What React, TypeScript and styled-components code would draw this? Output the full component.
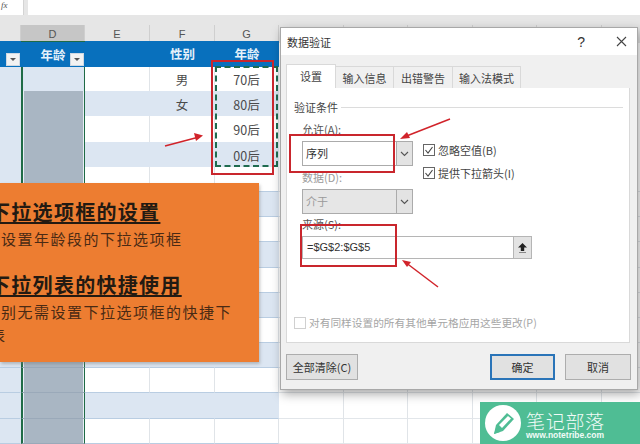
import styled, { createGlobalStyle } from 'styled-components';

const GlobalStyle = createGlobalStyle`
  html, body {
    margin: 0;
    padding: 0;
    background: #fff;
  }
  body {
    width: 640px;
    height: 444px;
    overflow: hidden;
    font-family: "Noto Sans CJK SC", "Liberation Sans", sans-serif;
    color: #333;
  }
`;

const COLUMNS = '21px 64px 65px 65px 64px repeat(6, 64.5px)';

const Page = styled.div`
  position: relative;
  width: 640px;
  height: 444px;
  overflow: hidden;
`;

const FormulaBar = styled.div`
  display: flex;
  height: 15px;
  padding-bottom: 1px;
  background: #e6e6e6;
  gap: 4px;
`;

const FxBox = styled.div`
  width: 22px;
  background: #fff;
  border-right: 1px solid #d4d4d4;
  font: italic 9px "Liberation Serif", serif;
  line-height: 11px;
  color: #555;
  padding-left: 1px;
`;

const FormulaInput = styled.div`
  flex: 1;
  background: #fff;
`;

const Gutter = styled.div`
  height: 9px;
  background: #e6e6e6;
`;

const ColumnHeads = styled.div`
  display: grid;
  grid-template-columns: ${COLUMNS};
  height: 16px;
  background: #e6e6e6;
`;

const ColumnHead = styled.div<{ $active?: boolean }>`
  background: ${(p) => (p.$active ? '#c6c6c6' : '#e6e6e6')};
  border-right: 1px solid #cfcfcf;
  font: 11px/18px "Liberation Sans", sans-serif;
  color: #555;
  text-align: center;
`;

const HeaderRow = styled.div`
  display: grid;
  grid-template-columns: ${COLUMNS};
  height: 25px;
`;

const HeaderCell = styled.div<{ $blue?: boolean; $picked?: boolean }>`
  position: relative;
  box-sizing: border-box;
  background: ${(p) => (p.$blue ? '#0870bd' : '#fff')};
  border-top: ${(p) => (p.$picked ? '1px solid #1f6b46' : 'none')};
  color: #e6f1fa;
  font-size: 12.5px;
  font-weight: 700;
  line-height: 25px;
  text-align: center;
`;

const FilterButton = styled.span`
  position: absolute;
  right: 1px;
  bottom: 1px;
  width: 14px;
  height: 13px;
  background: #f2f2f2;
  border: 1px solid #cfd8e2;
  box-sizing: border-box;
  &::after {
    content: '';
    position: absolute;
    left: 3px;
    top: 4px;
    border: 3px solid transparent;
    border-top: 3px solid #555;
  }
`;

const Row = styled.div`
  display: grid;
  grid-template-columns: ${COLUMNS};
  height: 25.2px;
`;

const Cell = styled.div<{ $band: boolean; $plain?: boolean }>`
  box-sizing: border-box;
  background: ${(p) => (p.$band && !p.$plain ? '#dce6f2' : '#fff')};
  border-bottom: 1px solid ${(p) => (p.$plain ? '#e2e6ea' : '#b9cde2')};
  border-right: 1px solid ${(p) => (p.$band && !p.$plain ? '#dce6f2' : '#e0e4e8')};
  font-size: 12.5px;
  line-height: 28px;
  text-align: center;
  color: #4a4a4a;
`;

const AgeCell = styled(Cell)`
  background: #dce6f2;
  border-right-color: #dce6f2;
`;

const PickedCell = styled.div<{ $first: boolean }>`
  box-sizing: border-box;
  background: ${(p) => (p.$first ? '#dce6f2' : '#a9b6c3')};
  border-left: 2px solid #1f6b46;
  border-right: 1px solid #1f6b46;
  border-top: ${(p) => (p.$first ? '1px solid #1f6b46' : 'none')};
  border-bottom: 1px solid #9aa9b9;
  box-shadow: ${(p) => (p.$first ? 'none' : 'inset 1px 0 0 #e8eef5, inset -1px 0 0 #e8eef5')};
`;

const DashedBox = styled.div`
  position: absolute;
  left: 215px;
  top: 66px;
  width: 63px;
  height: 101px;
  box-sizing: border-box;
  border: 2px dashed #1f6b4f;
`;

const RedBox = styled.div<{ $x: number; $y: number; $w: number; $h: number }>`
  position: absolute;
  left: ${(p) => p.$x}px;
  top: ${(p) => p.$y}px;
  width: ${(p) => p.$w}px;
  height: ${(p) => p.$h}px;
  box-sizing: border-box;
  border: 2px solid #c9262d;
  z-index: 5;
`;

const ArrowLayer = styled.svg`
  position: absolute;
  left: 0;
  top: 0;
  z-index: 6;
  pointer-events: none;
`;

const Callout = styled.div`
  position: absolute;
  left: 0;
  top: 183px;
  width: 259px;
  height: 179px;
  padding-top: 17px;
  box-sizing: border-box;
  background: #ed7d31;
  box-shadow: 1px 2px 3px rgba(120, 120, 120, 0.45);
  overflow: hidden;
  color: #231a12;
`;

const CalloutTitle = styled.div<{ $gap?: number }>`
  margin: ${(p) => p.$gap ?? 0}px 0 0 -10px;
  height: 24px;
  font-size: 20px;
  line-height: 24px;
  letter-spacing: 1.3px;
  font-weight: 700;
  text-decoration: underline;
  text-underline-offset: 2px;
  white-space: nowrap;
`;

const CalloutLine = styled.div<{ $shift: number; $gap?: number }>`
  margin: ${(p) => p.$gap ?? 0}px 0 0 ${(p) => p.$shift}px;
  font-size: 15px;
  line-height: 22px;
  letter-spacing: 1.5px;
  white-space: nowrap;
  color: #4a2a14;
`;

const Dialog = styled.div`
  position: absolute;
  left: 280px;
  top: 27px;
  width: 358px;
  height: 363px;
  box-sizing: border-box;
  display: flex;
  flex-direction: column;
  background: #f0f0f0;
  border: 1px solid #a8a8a8;
  box-shadow: 2px 4px 10px rgba(0, 0, 0, 0.35);
  font-size: 11px;
  color: #444;
`;

const TitleBar = styled.div`
  display: flex;
  align-items: center;
  height: 27px;
  padding: 0 10px 0 6px;
  background: #fff;
  font-size: 11px;
  color: #333;
`;

const TitleText = styled.div`
  flex: 1;
`;

const HelpMark = styled.div`
  font: 14px "Liberation Sans", sans-serif;
  margin-right: 31px;
`;

const Tabs = styled.div`
  display: flex;
  margin: 9px 0 0 5px;
  height: 24px;
  align-items: flex-end;
`;

const Tab = styled.div<{ $active?: boolean; $w: number }>`
  width: ${(p) => p.$w}px;
  height: ${(p) => (p.$active ? 24 : 22)}px;
  box-sizing: border-box;
  background: ${(p) => (p.$active ? '#fff' : '#f0f0f0')};
  border: 1px solid #d9d9d9;
  border-bottom: none;
  border-left: ${(p) => (p.$active ? '1px solid #d9d9d9' : 'none')};
  text-align: center;
  line-height: 22px;
  white-space: nowrap;
`;

const Panel = styled.div`
  margin: 0 7px 0 5px;
  height: 255px;
  box-sizing: border-box;
  padding: 10px 6px 0 7px;
  background: #fff;
  border: 1px solid #d9d9d9;
  border-top: none;
`;

const GroupTitle = styled.div`
  display: flex;
  align-items: center;
  gap: 3px;
  height: 18px;
  &::after {
    content: '';
    flex: 1;
    height: 1px;
    background: #dcdcdc;
  }
`;

const Settings = styled.div`
  display: flex;
  gap: 10px;
  padding-left: 8px;
  margin-top: 8px;
`;

const SelectColumn = styled.div`
  width: 111px;
`;

const FieldLabel = styled.div<{ $muted?: boolean }>`
  height: 17px;
  line-height: 11px;
  color: ${(p) => (p.$muted ? '#9a9a9a' : '#555')};
`;

const ComboBox = styled.div<{ $disabled?: boolean }>`
  display: flex;
  height: 25px;
  box-sizing: border-box;
  border: 1px solid #ababab;
  background: ${(p) => (p.$disabled ? '#e6e6e6' : '#fff')};
  color: ${(p) => (p.$disabled ? '#9a9a9a' : '#333')};
  margin-bottom: 6px;
  font-size: 11px;
  line-height: 23px;
  padding-left: 3px;
  &:last-child {
    margin-bottom: 0;
  }
`;

const ComboText = styled.div`
  flex: 1;
`;

const ComboArrow = styled.div`
  width: 15px;
  display: flex;
  align-items: center;
  justify-content: center;
  background: #e3e3e3;
  border-left: 1px solid #ababab;
`;

const CheckColumn = styled.div`
  display: flex;
  flex-direction: column;
  gap: 10px;
  padding-top: 19px;
`;

const CheckRow = styled.div<{ $muted?: boolean }>`
  display: flex;
  align-items: center;
  gap: 3px;
  height: 13px;
  font-size: 11px;
  white-space: nowrap;
  color: ${(p) => (p.$muted ? '#a5a5a5' : '#444')};
`;

const CheckBox = styled.div<{ $muted?: boolean }>`
  width: 12px;
  height: 12px;
  box-sizing: border-box;
  border: 1px solid ${(p) => (p.$muted ? '#d0d0d0' : '#666')};
  background: #fff;
  display: flex;
  align-items: center;
  justify-content: center;
`;

const SourceField = styled.div`
  margin: 5px 0 0 8px;
`;

const SourceInput = styled.div`
  display: flex;
  width: 230px;
  height: 23px;
  box-sizing: border-box;
  border: 1px solid #b5b5b5;
  background: #fff;
  font: 11px/21px "Liberation Sans", sans-serif;
  color: #333;
  padding-left: 4px;
`;

const SourceText = styled.div`
  flex: 1;
`;

const PickButton = styled.div`
  width: 17px;
  display: flex;
  align-items: center;
  justify-content: center;
  background: #e3e3e3;
  border-left: 1px solid #b5b5b5;
`;

const ApplyAll = styled(CheckRow)`
  margin-top: 57px;
  font-size: 10.7px;
`;

const Footer = styled.div`
  display: flex;
  justify-content: space-between;
  margin: 11px 6px 0 5px;
`;

const FooterActions = styled.div`
  display: flex;
  gap: 10px;
`;

const DialogButton = styled.div<{ $w: number; $primary?: boolean }>`
  width: ${(p) => p.$w}px;
  height: 26px;
  box-sizing: border-box;
  border: ${(p) => (p.$primary ? '2px solid #2a74b8' : '1px solid #adadad')};
  background: #e1e1e1;
  color: #333;
  text-align: center;
  font-size: 11px;
  line-height: ${(p) => (p.$primary ? 22 : 24)}px;
`;

const Brand = styled.div`
  position: absolute;
  right: 0;
  bottom: 0;
  width: 160px;
  height: 42px;
  display: flex;
  align-items: center;
  gap: 5px;
  padding-left: 5px;
  box-sizing: border-box;
  background: #4fbd94;
  color: #f1fbf7;
  z-index: 7;
`;

const BrandText = styled.div`
  display: flex;
  flex-direction: column;
  gap: 1px;
  padding-top: 2px;
`;

const BrandName = styled.div`
  height: 22px;
  overflow: hidden;
  font-size: 19px;
  font-weight: 300;
  line-height: 25px;
  letter-spacing: 0.7px;
  white-space: nowrap;
`;

const BrandUrl = styled.div`
  font: 700 8.5px/9px "Liberation Sans", sans-serif;
  white-space: nowrap;
`;

const Chevron = () => (
  <svg width="9" height="6" viewBox="0 0 9 6">
    <path d="M1 1l3.5 3.5L8 1" fill="none" stroke="#555" strokeWidth="1.1" />
  </svg>
);

const Tick = () => (
  <svg width="10" height="10" viewBox="0 0 10 10">
    <path d="M1.5 5l2.5 3 4.5-6" fill="none" stroke="#444" strokeWidth="1.1" />
  </svg>
);

const UploadIcon = () => (
  <svg width="11" height="12" viewBox="0 0 11 12">
    <path d="M5.5 1L10 5.5H7.2V9H3.8V5.5H1z" fill="#222" />
    <rect x="2" y="10" width="7" height="1" fill="#888" />
  </svg>
);

const rows = [
  { gender: '男', age: '70后' },
  { gender: '女', age: '80后' },
  { gender: '', age: '90后' },
  { gender: '', age: '00后' },
  ...Array.from({ length: 11 }, () => ({ gender: '', age: '' })),
];

export default function App() {
  return (
    <Page>
      <GlobalStyle />
      <FormulaBar>
        <FxBox>fx</FxBox>
        <FormulaInput />
      </FormulaBar>
      <Gutter />
      <ColumnHeads>
        <ColumnHead />
        <ColumnHead $active>D</ColumnHead>
        <ColumnHead>E</ColumnHead>
        <ColumnHead>F</ColumnHead>
        <ColumnHead>G</ColumnHead>
        {[0, 1, 2, 3, 4, 5].map((n) => <ColumnHead key={n} />)}
      </ColumnHeads>
      <HeaderRow>
        <HeaderCell $blue><FilterButton /></HeaderCell>
        <HeaderCell $blue $picked>年龄<FilterButton /></HeaderCell>
        <HeaderCell $blue />
        <HeaderCell $blue>性别</HeaderCell>
        <HeaderCell $blue>年龄</HeaderCell>
      </HeaderRow>
      {rows.map((row, i) => {
        const band = i % 2 === 1;
        return (
          <Row key={i}>
            <AgeCell $band={band} />
            <PickedCell $first={i === 0} />
            <Cell $band={band} />
            <Cell $band={band}>{row.gender}</Cell>
            <Cell $band={band}>{row.age}</Cell>
            {[0, 1, 2, 3, 4, 5].map((n) => <Cell key={n} $band={false} $plain />)}
          </Row>
        );
      })}

      <DashedBox />
      <RedBox $x={211} $y={60} $w={63} $h={115} />

      <Callout>
        <CalloutTitle>下拉选项框的设置</CalloutTitle>
        <CalloutLine $shift={1} $gap={4}>设置年龄段的下拉选项框</CalloutLine>
        <CalloutTitle $gap={23}>下拉列表的快捷使用</CalloutTitle>
        <CalloutLine $shift={1} $gap={4}>别无需设置下拉选项框的快捷下</CalloutLine>
        <CalloutLine $shift={-10} $gap={1}>表</CalloutLine>
      </Callout>

      <Dialog>
        <TitleBar>
          <TitleText>数据验证</TitleText>
          <HelpMark>?</HelpMark>
          <svg width="11" height="11" viewBox="0 0 11 11">
            <path d="M1 1l9 9M10 1l-9 9" stroke="#444" strokeWidth="1.1" />
          </svg>
        </TitleBar>
        <Tabs>
          <Tab $active $w={50}>设置</Tab>
          <Tab $w={58}>输入信息</Tab>
          <Tab $w={59}>出错警告</Tab>
          <Tab $w={68}>输入法模式</Tab>
        </Tabs>
        <Panel>
          <GroupTitle>验证条件</GroupTitle>
          <Settings>
            <SelectColumn>
              <FieldLabel>允许(A):</FieldLabel>
              <ComboBox>
                <ComboText>序列</ComboText>
                <ComboArrow><Chevron /></ComboArrow>
              </ComboBox>
              <FieldLabel $muted>数据(D):</FieldLabel>
              <ComboBox $disabled>
                <ComboText>介于</ComboText>
                <ComboArrow><Chevron /></ComboArrow>
              </ComboBox>
            </SelectColumn>
            <CheckColumn>
              <CheckRow><CheckBox><Tick /></CheckBox>忽略空值(B)</CheckRow>
              <CheckRow><CheckBox><Tick /></CheckBox>提供下拉箭头(I)</CheckRow>
            </CheckColumn>
          </Settings>
          <SourceField>
            <FieldLabel>来源(S):</FieldLabel>
            <SourceInput>
              <SourceText>=$G$2:$G$5</SourceText>
              <PickButton><UploadIcon /></PickButton>
            </SourceInput>
          </SourceField>
          <ApplyAll $muted>
            <CheckBox $muted />
            对有同样设置的所有其他单元格应用这些更改(P)
          </ApplyAll>
        </Panel>
        <Footer>
          <DialogButton $w={72}>全部清除(C)</DialogButton>
          <FooterActions>
            <DialogButton $w={65} $primary>确定</DialogButton>
            <DialogButton $w={66}>取消</DialogButton>
          </FooterActions>
        </Footer>
      </Dialog>

      <RedBox $x={289} $y={134} $w={106} $h={39} />
      <RedBox $x={300} $y={224} $w={97} $h={43} />

      <ArrowLayer width="640" height="444" viewBox="0 0 640 444">
        <g stroke="#d1232a" strokeWidth="1.5" fill="none">
          <path d="M165 146L199 137" />
          <path d="M450 119L404 137" />
          <path d="M438 287L405 262" />
        </g>
        <g fill="#d1232a">
          <path d="M203 135.5l-9-2.5 2 8z" />
          <path d="M400 139l7-7 3 6z" />
          <path d="M402 260l9 2-4 5z" />
        </g>
      </ArrowLayer>

      <Brand>
        <svg width="36" height="36" viewBox="0 0 36 36">
          <circle cx="18" cy="18" r="18" fill="#fff" />
          <path d="M9 29l2-9L22 8l7 6-11 12z" fill="#4fbd94" />
          <path d="M14 20L23 11l3 2.5-9 9.5z" fill="#fff" />
          <path d="M9 29l2-6 4 4z" fill="#4fbd94" />
        </svg>
        <BrandText>
          <BrandName>笔记部落</BrandName>
          <BrandUrl>www.notetribe.com</BrandUrl>
        </BrandText>
      </Brand>
    </Page>
  );
}
